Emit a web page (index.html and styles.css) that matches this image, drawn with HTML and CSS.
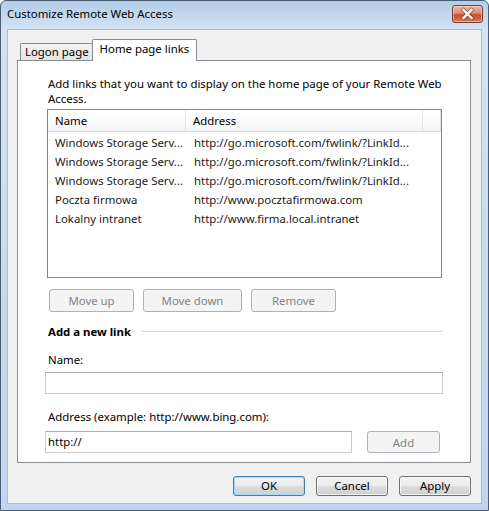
FILE: index.html
```html
<!DOCTYPE html>
<html lang="en">
<head>
  <meta charset="UTF-8" />
  <title>Customize Remote Web Access</title>
  <link rel="stylesheet" href="styles.css">
</head>
<body>
  <div class="window">
    <div class="titlebar">
      <span class="title">Customize Remote Web Access</span>
      <span class="close">
        <svg width="29" height="16" viewBox="0 0 29 16">
          <path d="M10.5 4 L18.5 12 M18.5 4 L10.5 12" stroke="#5a2a1e" stroke-width="4" stroke-linecap="square" opacity="0.55"/>
          <path d="M10.5 4 L18.5 12 M18.5 4 L10.5 12" stroke="#ffffff" stroke-width="2.4" stroke-linecap="square"/>
        </svg>
      </span>
    </div>

    <div class="client">
      <!-- tab strip -->
      <div class="tabs">
        <div class="tab">Logon page</div>
        <div class="tab active">Home page links</div>
      </div>

      <div class="panel">
        <p class="intro">Add links that you want to display on the home page of your Remote Web<br>Access.</p>

        <div class="list">
          <div class="list-head">
            <div class="col-name">Name</div>
            <div class="col-addr">Address</div>
            <div class="col-rest"></div>
          </div>
          <div class="list-body">
            <div class="row"><span class="col-name">Windows Storage Serv...</span><span class="col-addr">http://go.microsoft.com/fwlink/?LinkId...</span></div>
            <div class="row"><span class="col-name">Windows Storage Serv...</span><span class="col-addr">http://go.microsoft.com/fwlink/?LinkId...</span></div>
            <div class="row"><span class="col-name">Windows Storage Serv...</span><span class="col-addr">http://go.microsoft.com/fwlink/?LinkId...</span></div>
            <div class="row"><span class="col-name">Poczta firmowa</span><span class="col-addr">http://www.pocztafirmowa.com</span></div>
            <div class="row"><span class="col-name">Lokalny intranet</span><span class="col-addr">http://www.firma.local.intranet</span></div>
          </div>
        </div>

        <div class="list-buttons">
          <button class="btn btn-small" disabled>Move up</button>
          <button class="btn btn-wide" disabled>Move down</button>
          <button class="btn btn-small" disabled>Remove</button>
        </div>

        <div class="group-title">
          <span>Add a new link</span>
          <span class="rule"></span>
        </div>

        <div class="field-label name-label">Name:</div>
        <div class="textbox name-box"></div>

        <div class="field-label addr-label">Address (example: http://www.bing.com):</div>
        <div class="addr-row">
          <div class="textbox addr-box">http://</div>
          <button class="btn btn-add" disabled>Add</button>
        </div>
      </div>

      <div class="footer">
        <button class="btn dialog-btn default">OK</button>
        <button class="btn dialog-btn">Cancel</button>
        <button class="btn dialog-btn">Apply</button>
      </div>
    </div>
  </div>
</body>
</html>
```

FILE: styles.css
```css
body {
  margin: 0;
  font-family: "Noto Sans", "Open Sans", sans-serif;
  font-size: 11.4px;
  color: #000;
}

.window {
  box-sizing: border-box;
  width: 489px;
  height: 511px;
  border: 1px solid #4a5d74;
  border-radius: 6px 6px 0 0;
  background: linear-gradient(#b3cce8, #d4e3f3 28px, #c6daef 60%, #c0d6ee);
  display: flex;
  flex-direction: column;
}

.titlebar {
  height: 29px;
  display: flex;
  align-items: flex-start;
  padding-left: 6px;
}

.title {
  margin-top: 5px;
  line-height: 16px;
  flex: 1;
}

.close {
  margin-top: 4px;
  margin-right: 5px;
  width: 29px;
  height: 16px;
  border: 1px solid #6d3e32;
  border-radius: 3px;
  background: linear-gradient(#efb7a4, #dd8b70 45%, #c54e2e 55%, #d9785a);
  box-shadow: inset 0 0 0 1px rgba(255, 230, 220, 0.5);
}

.close svg {
  display: block;
}

.client {
  flex: 1;
  margin: 0 7px 7px;
  background: #f0f0f0;
  box-shadow: 0 0 0 1px #a9bdd4;
  padding: 9px 10px 0 9px;
}

/* tabs */
.tabs {
  display: flex;
  align-items: flex-end;
  height: 22px;
  margin-bottom: -1px;
  padding-left: 3px;
}

.tab {
  box-sizing: border-box;
  height: 17px;
  margin-bottom: 1px;
  padding: 0 3px 0 4px;
  border: 1px solid #898c95;
  border-bottom: none;
  border-radius: 2px 2px 0 0;
  background: linear-gradient(#f2f2f2, #e4e4e4);
  line-height: 16px;
}

.tab.active {
  position: relative;
  z-index: 1;
  height: 22px;
  margin-bottom: 0;
  margin-left: -1px;
  padding: 0 7px 0 7px;
  background: #fff;
  line-height: 18px;
}

.panel {
  box-sizing: border-box;
  width: 454px;
  height: 403px;
  border: 1px solid #898c95;
  background: #fff;
  padding: 15px 0 0 29px;
}

.intro {
  margin: 0 0 3px 1px;
  line-height: 15px;
  white-space: nowrap;
}

/* list view */
.list {
  box-sizing: border-box;
  width: 395px;
  height: 169px;
  border: 1px solid #828790;
  overflow: hidden;
}

.list-head {
  display: flex;
  height: 21px;
  border-bottom: 1px solid #d5d5d5;
  background: linear-gradient(#ffffff, #f5f6f7);
  line-height: 21px;
}

.list-head > div {
  box-sizing: border-box;
  border-right: 1px solid #e2e3e5;
}

.col-name {
  box-sizing: border-box;
  width: 138px;
  padding-left: 7px;
  white-space: nowrap;
  overflow: hidden;
}

.col-addr {
  box-sizing: border-box;
  width: 237px;
  padding-left: 7px;
  white-space: nowrap;
  overflow: hidden;
}

.col-rest {
  flex: 1;
}

.list-body {
  padding-top: 1px;
}

.row {
  display: flex;
  height: 19px;
  line-height: 19px;
  color: #1a1a1a;
}

.row .col-addr {
  padding-left: 8px;
}

/* buttons */
.btn {
  box-sizing: border-box;
  font: inherit;
  padding: 0;
  border-radius: 3px;
  border: 1px solid #707070;
  background: linear-gradient(#f2f2f2, #ebebeb 50%, #dddddd 51%, #cfcfcf);
  color: #000;
  box-shadow: inset 0 0 0 1px rgba(255, 255, 255, 0.7);
}

.btn:disabled {
  border-color: #adb2b5;
  background: #f4f4f4;
  color: #838383;
  box-shadow: none;
}

.list-buttons {
  display: flex;
  gap: 9px;
  margin: 11px 0 0 2px;
}

.btn-small {
  width: 85px;
  height: 23px;
}

.btn-wide {
  width: 99px;
  height: 23px;
}

.group-title {
  display: flex;
  align-items: center;
  width: 395px;
  margin: 12px 0 0 1px;
  line-height: 15px;
  font-weight: bold;
}

.group-title .rule {
  flex: 1;
  height: 1px;
  margin-left: 10px;
  background: #d0dae2;
}

.field-label {
  margin-left: 1px;
  line-height: 15px;
}

.name-label {
  margin-top: 13px;
}

.addr-label {
  margin-top: 15px;
}

.textbox {
  box-sizing: border-box;
  height: 22px;
  margin-left: -2px;
  border: 1px solid #c9ccd1;
  border-top-color: #abadb3;
  padding-left: 2px;
  line-height: 20px;
  background: #fff;
}

.name-box {
  width: 398px;
  margin-top: 5px;
}

.addr-row {
  display: flex;
  gap: 15px;
  margin-top: 7px;
}

.addr-box {
  width: 307px;
}

.btn-add {
  width: 73px;
  height: 22px;
}

/* dialog buttons */
.footer {
  display: flex;
  justify-content: flex-end;
  gap: 11px;
  margin-top: 13px;
}

.dialog-btn {
  width: 72px;
  height: 20px;
  line-height: 18px;
}

.dialog-btn.default {
  border-color: #3c7fb1;
  box-shadow: inset 0 0 0 1px #a8dcf2;
}
```
